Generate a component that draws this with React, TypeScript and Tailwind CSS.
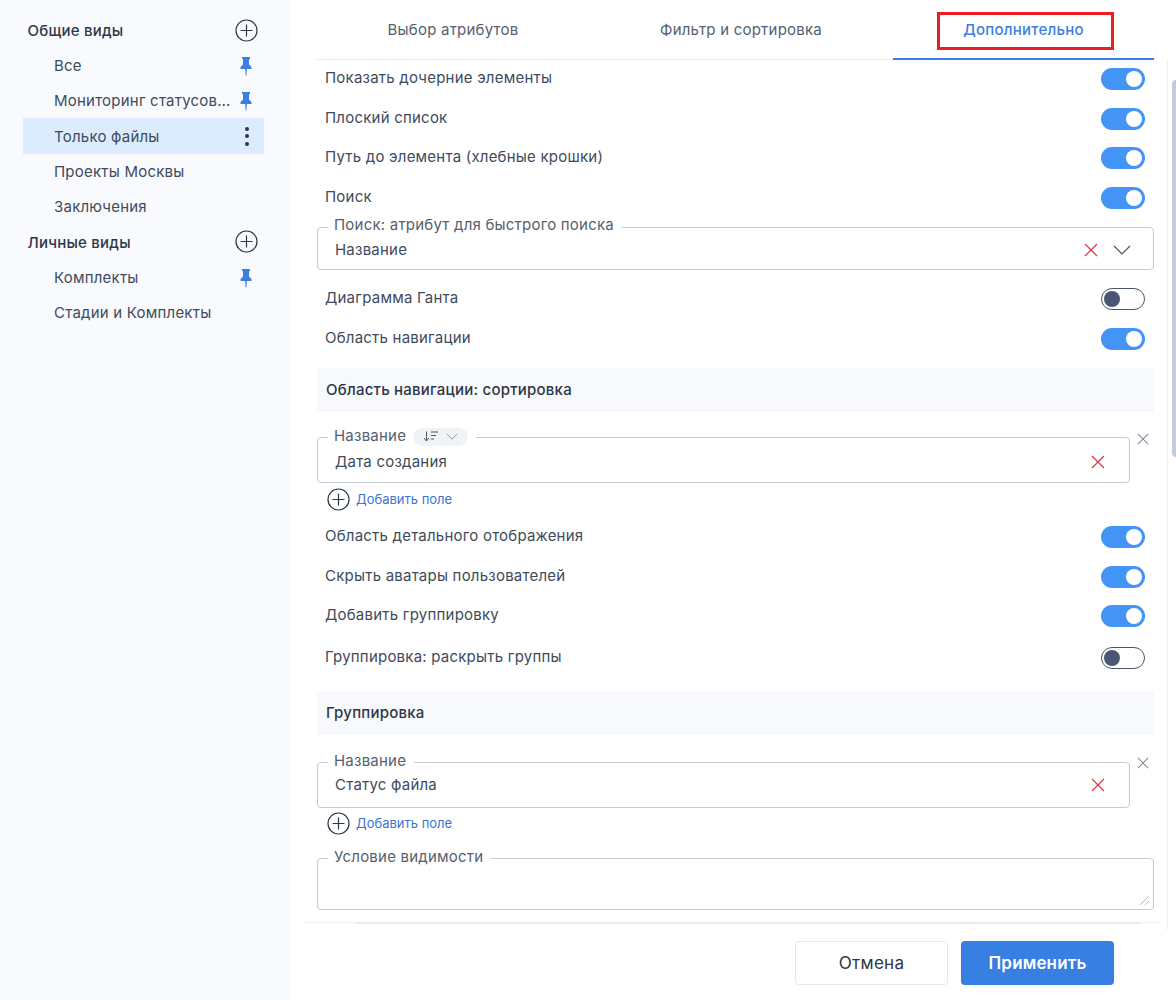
import React from "react";

const Plus = () => (
  <svg width="23" height="23" viewBox="0 0 23 23" fill="none">
    <circle cx="11.5" cy="11.5" r="10.5" stroke="#2d3748" strokeWidth="1.2" />
    <path d="M11.5 5.5v12M5.5 11.5h12" stroke="#2d3748" strokeWidth="1.2" />
  </svg>
);

const Pin = () => (
  <svg width="12" height="19" viewBox="0 0 12 19" fill="#3b7fe0" className="translate-y-[1px]">
    <path d="M2 0h8v1.5L9 2.5v5l2.5 2.5V12H6.8L6.4 18.5h-.8L5.2 12H.5v-2L3 7.5v-5L2 1.5z" />
  </svg>
);

const Cross = ({ color = "#dc3545", size = 14 }: { color?: string; size?: number }) => (
  <svg width={size} height={size} viewBox="0 0 14 14" fill="none">
    <path d="M1 1l12 12M13 1L1 13" stroke={color} strokeWidth="1.2" />
  </svg>
);

const Chevron = ({ w = 18, h = 10, color = "#4a5568" }: { w?: number; h?: number; color?: string }) => (
  <svg width={w} height={h} viewBox="0 0 18 10" fill="none">
    <path d="M1 1l8 8 8-8" stroke={color} strokeWidth="1.2" />
  </svg>
);

const Toggle = ({ on = true }: { on?: boolean }) =>
  on ? (
    <div className="flex h-[22px] w-[44px] shrink-0 translate-y-[1px] items-center justify-end rounded-full bg-[#4494f6] pr-[3px]">
      <div className="h-4 w-4 rounded-full bg-white" />
    </div>
  ) : (
    <div className="flex h-[22px] w-[44px] shrink-0 translate-y-[1px] items-center rounded-full border border-[#4a5568] bg-white pl-[2px]">
      <div className="h-4 w-4 rounded-full bg-[#4a5674]" />
    </div>
  );

const Row = ({ label, on = true, h = "h-10" }: { label: string; on?: boolean; h?: string }) => (
  <div className={`flex ${h} items-center justify-between pl-2 pr-[9px]`}>
    <span className="text-[15px] tracking-[0.22px] text-[#3f4a5c]">{label}</span>
    <Toggle on={on} />
  </div>
);

const Section = ({ label, className = "" }: { label: string; className?: string }) => (
  <div className={`flex h-11 items-center bg-[#f8f9fd] pl-[9px] text-[15px] font-medium tracking-[0.22px] text-[#2d3748] ${className}`}>
    {label}
  </div>
);

const Legend = ({ text, sortChip }: { text: string; sortChip?: boolean }) => (
  <legend className="ml-0 flex h-[18px] items-start pl-[6px] pr-[8px] text-[15px] leading-[14px] tracking-[0.22px] text-[#566070]">
    {text}
    {sortChip && (
      <span className="ml-[7px] -mt-[1px] flex h-[18px] w-[55px] items-center justify-center gap-[7px] rounded-full bg-[#f0f2f5]">
        <svg width="16" height="11" viewBox="0 0 16 11" fill="none" stroke="#4a5568" strokeWidth="1">
          <path d="M3.5 0.5v9M1 7l2.5 3L6 7M8 1h7M8 4.5h5M8 8h3" />
        </svg>
        <Chevron w={12} h={7} color="#7a8494" />
      </span>
    )}
  </legend>
);

const Field = ({
  legend,
  value,
  sortChip,
  chevron,
  height,
  rowH,
}: {
  legend: string;
  value: string;
  sortChip?: boolean;
  chevron?: boolean;
  height: string;
  rowH: string;
}) => (
  <fieldset className={`${height} rounded border border-[#c2cbd6] pl-[10px] ${chevron ? "pr-[22px]" : "pr-[24px]"}`}>
    <Legend text={legend} sortChip={sortChip} />
    <div className={`flex ${rowH} items-center justify-between pl-[7px]`}>
      <span className="text-[15px] tracking-[0.22px] text-[#3f4a5c]">{value}</span>
      <span className="flex items-center gap-[15px]">
        <Cross size={14} />
        {chevron && <Chevron />}
      </span>
    </div>
  </fieldset>
);

const AddField = ({ className }: { className: string }) => (
  <div className={`flex h-[23px] items-center gap-[6px] pl-[10px] ${className}`}>
    <Plus />
    <span className="text-[13px] text-[#3b74d0]">Добавить поле</span>
  </div>
);

const RemovableField = ({
  legend,
  value,
  sortChip,
  rowH,
}: {
  legend: string;
  value: string;
  sortChip?: boolean;
  rowH: string;
}) => (
  <div className="relative pr-6">
    <Field legend={legend} value={value} sortChip={sortChip} height="h-[54px]" rowH={rowH} />
    <div className={`absolute right-[5px] flex ${sortChip ? "top-[4px]" : "top-[3px]"}`}>
      <Cross size={12} color="#7f8a98" />
    </div>
  </div>
);

const SideItem = ({ label, pin, active }: { label: string; pin?: boolean; active?: boolean }) => (
  <div className={`ml-[23px] flex h-[35.3px] w-[241px] items-center justify-between pl-[31px] pr-[12px] ${active ? "bg-[#dcecfe]" : ""}`}>
    <span className="max-w-[177px] truncate pt-[2px] text-[15px] tracking-[0.22px] text-[#3f4a5c]">{label}</span>
    {pin && <Pin />}
    {active && (
      <div className="flex flex-col gap-[3.5px] pr-[3px]">
        <i className="h-[4px] w-[4px] rounded-full bg-[#2d3748]" />
        <i className="h-[4px] w-[4px] rounded-full bg-[#2d3748]" />
        <i className="h-[4px] w-[4px] rounded-full bg-[#2d3748]" />
      </div>
    )}
  </div>
);

const SideHead = ({ label }: { label: string }) => (
  <div className="flex h-[35.3px] items-center justify-between pl-[27.5px] pr-[32px]">
    <span className="pt-[2px] text-[15px] font-medium tracking-[0.22px] text-[#2d3748]">{label}</span>
    <Plus />
  </div>
);

export default function App() {
  return (
    <div className="flex h-[1000px] w-[1176px] overflow-hidden bg-white font-['Inter',sans-serif]">
      <aside className="w-[290px] shrink-0 bg-[#f9fafe] pt-[12.5px]">
        <SideHead label="Общие виды" />
        <SideItem label="Все" pin />
        <SideItem label="Мониторинг статусов файлов" pin />
        <SideItem label="Только файлы" active />
        <SideItem label="Проекты Москвы" />
        <SideItem label="Заключения" />
        <SideHead label="Личные виды" />
        <SideItem label="Комплекты" pin />
        <SideItem label="Стадии и Комплекты" />
      </aside>

      <main className="relative flex min-w-0 flex-1 flex-col">
        <div className="ml-[27px] mr-[22px] flex h-[60px] shrink-0 border-b border-[#e3e8ef] text-[15px] tracking-[0.22px]">
          <div className="flex w-[272px] items-center justify-center pt-[2px] text-[#566070]">Выбор атрибутов</div>
          <div className="flex w-[304px] items-center justify-center pt-[2px] text-[#566070]">Фильтр и сортировка</div>
          <div className="relative -mb-[1px] flex flex-1 items-center justify-center border-b-2 border-[#3b80e0] pt-[2px] font-medium text-[#3b7fe0]">
            Дополнительно
            <div className="absolute left-[44px] top-[12px] h-[38px] w-[177px] border-[3px] border-[#ec1c24]" />
          </div>
        </div>

        <div className="flex h-[862px] shrink-0 overflow-hidden">
          <div className="ml-[27px] -mt-[1.5px] w-[837px] shrink-0">
            <Row label="Показать дочерние элементы" h="h-[39.6px]" />
            <Row label="Плоский список" h="h-[39.6px]" />
            <Row label="Путь до элемента (хлебные крошки)" h="h-[39.6px]" />
            <Row label="Поиск" h="h-[39.6px]" />
            <div className="h-[1.6px]" />
            <Field legend="Поиск: атрибут для быстрого поиска" value="Название" chevron height="h-[52px]" rowH="h-[28px]" />
            <div className="h-[7.5px]" />
            <Row label="Диаграмма Ганта" on={false} />
            <Row label="Область навигации" />
            <Section label="Область навигации: сортировка" className="mt-[10px]" />
            <div className="mt-[17px]">
              <RemovableField legend="Название" value="Дата создания" sortChip rowH="h-[30px]" />
            </div>
            <AddField className="mt-[5px]" />
            <div className="h-[5.5px]" />
            <Row label="Область детального отображения" h="h-[39.6px]" />
            <Row label="Скрыть аватары пользователей" h="h-[39.6px]" />
            <Row label="Добавить группировку" h="h-[39.6px]" />
            <Row label="Группировка: раскрыть группы" on={false} h="h-[43px]" />
            <Section label="Группировка" className="mt-[12.7px]" />
            <div className="mt-[19px]">
              <RemovableField legend="Название" value="Статус файла" rowH="h-[27px]" />
            </div>
            <AddField className="mt-[4px]" />
            <fieldset className="relative mt-[15px] h-[60px] rounded border border-[#c2cbd6] pl-[10px]">
              <Legend text="Условие видимости" />
              <svg width="11" height="11" viewBox="0 0 11 11" fill="none" stroke="#b5bcc6" className="absolute bottom-[3px] right-[3px]">
                <path d="M1 10L10 1M6 10l4-4" />
              </svg>
            </fieldset>
          </div>
        </div>

        <div className="absolute left-[877px] top-[60px] h-[870px] w-[9px] border-l border-[#eef0f4]">
          <div className="ml-[4px] mt-[20px] h-[377px] w-[4px] rounded-l bg-[#c2ccd8]" />
        </div>

        <div className="relative ml-[13px] mr-[16px] flex h-[78px] flex-1 justify-end gap-[13px] border-t border-[#eceef3] pr-[46px] pt-[18px]">
          <div className="absolute left-[53px] right-[19px] top-[-1px] h-[2px] bg-[#e9ebf1]" />
          <button className="h-[44px] w-[153px] rounded border border-[#e5e8ef] bg-white pt-[2px] text-[17px] tracking-[0.3px] text-[#2d3748]">Отмена</button>
          <button className="h-[44px] w-[153px] rounded bg-[#377fe0] pt-[2px] text-[17px] font-semibold tracking-[0.15px] text-white">Применить</button>
        </div>
      </main>
    </div>
  );
}
